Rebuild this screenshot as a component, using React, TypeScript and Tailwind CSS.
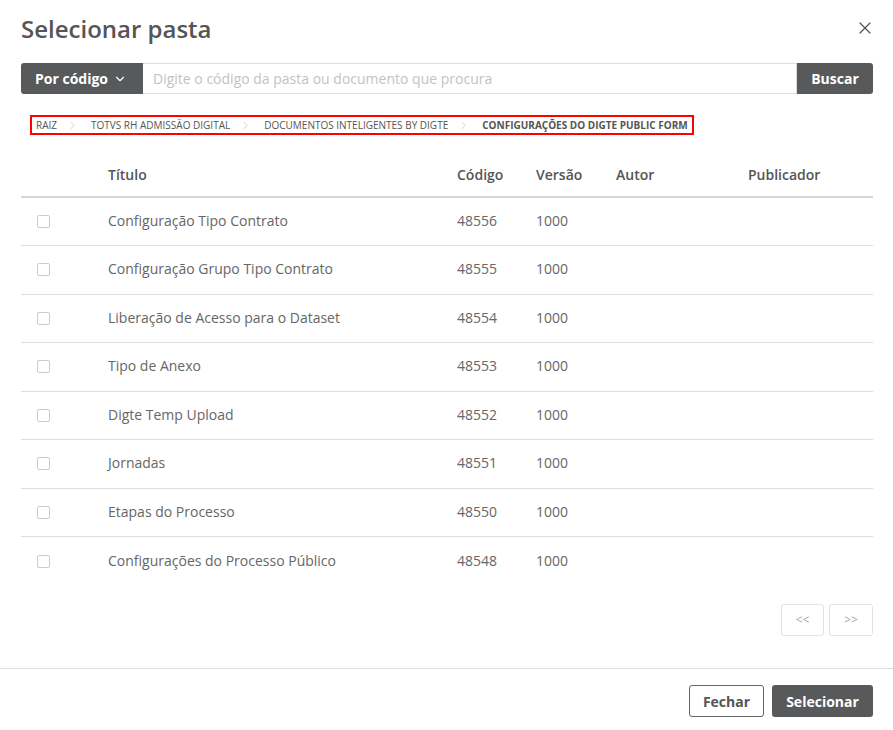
import { ChevronDown, ChevronRight, X } from "lucide-react";

const rows = [
  { titulo: "Configuração Tipo Contrato", codigo: "48556", versao: "1000" },
  { titulo: "Configuração Grupo Tipo Contrato", codigo: "48555", versao: "1000" },
  { titulo: "Liberação de Acesso para o Dataset", codigo: "48554", versao: "1000" },
  { titulo: "Tipo de Anexo", codigo: "48553", versao: "1000" },
  { titulo: "Digte Temp Upload", codigo: "48552", versao: "1000" },
  { titulo: "Jornadas", codigo: "48551", versao: "1000" },
  { titulo: "Etapas do Processo", codigo: "48550", versao: "1000" },
  { titulo: "Configurações do Processo Público", codigo: "48548", versao: "1000" },
];

const crumbs = ["RAIZ", "TOTVS RH ADMISSÃO DIGITAL", "DOCUMENTOS INTELIGENTES BY DIGTE"];

export default function App() {
  return (
    <div className="w-[893px] h-[730px] bg-white text-[#666] font-['Open_Sans',sans-serif] flex flex-col overflow-hidden">
      {/* Cabeçalho */}
      <div className="flex items-start justify-between pl-[21px] pr-[18px] pt-[13px]">
        <h1 className="text-[24px] leading-[32px] font-semibold text-[#555]">Selecionar pasta</h1>
        <button className="mt-[5px] text-[#555]">
          <X size={20} strokeWidth={1.5} />
        </button>
      </div>

      <div className="px-[20px] pt-[18px]">
        {/* Busca */}
        <div className="flex h-[31px] ml-px">
          <button className="flex items-center gap-[5px] bg-[#58595b] text-white font-bold text-[14px] pl-[14px] pr-[16px] rounded-l-[3px]">
            Por código
            <ChevronDown size={14} strokeWidth={2} />
          </button>
          <input
            className="flex-1 border border-l-0 border-[#ddd] px-[10px] text-[14px] text-[#555] placeholder-[#c3c3c3] outline-none"
            placeholder="Digite o código da pasta ou documento que procura"
          />
          <button className="bg-[#58595b] text-white font-bold text-[14px] w-[76px] rounded-r-[3px]">Buscar</button>
        </div>

        {/* Breadcrumb */}
        <div className="mt-[21px] ml-[10px] inline-flex items-center h-[20px] border-2 border-[#ff0000] pl-[4px] pr-[4px] text-[10px] text-[#555]">
          {crumbs.map((c) => (
            <span key={c} className="flex items-center">
              <span>{c}</span>
              <ChevronRight size={13} strokeWidth={1.2} className="ml-[9px] mr-[12px] text-[#bbb]" />
            </span>
          ))}
          <span className="font-bold">CONFIGURAÇÕES DO DIGTE PUBLIC FORM</span>
        </div>

        {/* Tabela */}
        <table className="mt-[21px] w-[852px] ml-px border-collapse text-[14px]">
          <thead>
            <tr className="border-b-2 border-[#d6d6d6] h-[41px] text-left text-[#555]">
              <th className="w-[87px]" />
              <th className="font-semibold w-[349px] pb-[3px]">Título</th>
              <th className="font-semibold w-[79px] pb-[3px]">Código</th>
              <th className="font-semibold w-[80px] pb-[3px]">Versão</th>
              <th className="font-semibold w-[132px] pb-[3px]">Autor</th>
              <th className="font-semibold pb-[3px]">Publicador</th>
            </tr>
          </thead>
          <tbody>
            {rows.map((r, i) => (
              <tr
                key={r.codigo}
                className={`h-[48.5px] ${i < rows.length - 1 ? "border-b border-[#ddd]" : ""}`}
              >
                <td className="pl-[16px]">
                  <span className="block w-[13px] h-[13px] border border-[#ccc] rounded-[2px]" />
                </td>
                <td className="pb-[2px]">{r.titulo}</td>
                <td className="pb-[2px]">{r.codigo}</td>
                <td className="pb-[2px]">{r.versao}</td>
                <td />
                <td />
              </tr>
            ))}
          </tbody>
        </table>

        {/* Paginação */}
        <div className="flex justify-end gap-[5px] mt-[19px]">
          <button className="w-[43px] h-[32px] border border-[#e3e3e3] rounded-[3px] text-[12px] text-[#aaa]">&lt;&lt;</button>
          <button className="w-[44px] h-[32px] border border-[#e3e3e3] rounded-[3px] text-[12px] text-[#aaa]">&gt;&gt;</button>
        </div>
      </div>

      {/* Rodapé */}
      <div className="mt-[32px] border-t border-[#ddd] flex justify-end gap-[8px] pt-[16px] pr-[20px]">
        <button className="w-[75px] h-[32px] border border-[#666] rounded-[3px] text-[14px] font-bold text-[#555]">Fechar</button>
        <button className="w-[101px] h-[32px] bg-[#58595b] rounded-[3px] text-[14px] font-bold text-white">Selecionar</button>
      </div>
    </div>
  );
}
